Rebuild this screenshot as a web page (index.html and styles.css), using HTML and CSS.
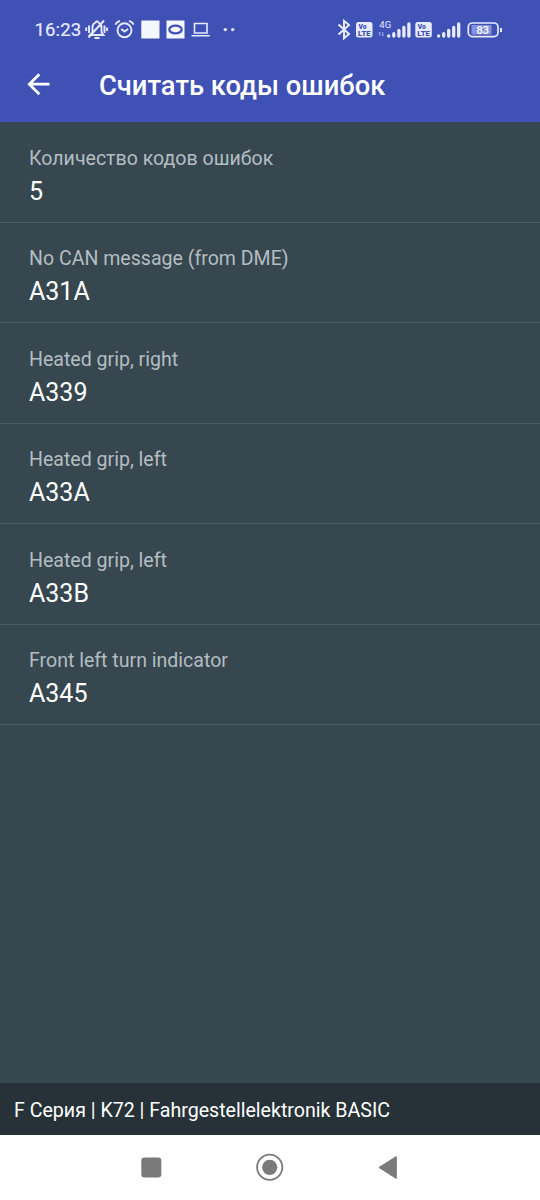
FILE: index.html
```html
<!DOCTYPE html>
<html lang="ru">
<head>
<meta charset="utf-8">
<title>Считать коды ошибок</title>
<link rel="stylesheet" href="styles.css">
</head>
<body>
<div class="screen">
  <header class="header">
    <div class="status">
      <span class="time">16:23</span>
      <svg class="status-left" width="155" height="30" viewBox="85 15 155 30" fill="none" stroke="#e6ebff" stroke-width="1.900">
        <path d="M90 35h13.500l-2-2.500v-5.500a5 5 0 0 0-3-4.500q-1.500-2.500-3 0a5 5 0 0 0-3 4.500v5.500zM94.500 38h5M88.500 37.500L104 20.500M86.200 27.500v3.500M107 27.500v3.500M89 25.500v7.500M104.500 25.500v7.500"/>
        <circle cx="124.500" cy="30.300" r="7"/>
        <path d="M121.200 29l3.300 2.600 3.500-2.600M115.300 24.700q1.500-3 4.700-3.900M133.700 24.700q-1.500-3-4.700-3.900"/>
        <path d="M141.300 20.500h18.200v18h-18.200zM166.500 20.500h18v18h-18z" fill="#f5f7ff" stroke="none"/>
        <ellipse cx="175.500" cy="29.500" rx="6.200" ry="3.800" stroke="#3f51b5" stroke-width="2.300"/>
        <path d="M194.500 23.500h12.500v9.500h-12.500zM191.500 35.700h18.300" stroke-width="1.600"/>
        <g fill="#e6ebff" stroke="none"><circle cx="225.300" cy="29.600" r="1.700"/><circle cx="232.700" cy="29.600" r="1.700"/></g>
      </svg>
      <svg class="status-right" width="170" height="30" viewBox="335 15 170 30">
        <path d="M338.500 24.500l10.500 9.500-5 4.300V20.800l5 4.200-10.500 9.500" fill="none" stroke="#e6ebff" stroke-width="2"/>
        <rect x="356" y="22" width="16.500" height="15.500" rx="2.500" fill="#e6ebff"/>
        <rect x="415.300" y="22" width="16.500" height="15.500" rx="2.500" fill="#e6ebff"/>
        <g class="volte">
          <text x="358.500" y="29" textLength="8" lengthAdjust="spacingAndGlyphs">Vo</text><text x="358" y="36" textLength="12.500" lengthAdjust="spacingAndGlyphs">LTE</text>
          <text x="417.800" y="29" textLength="8" lengthAdjust="spacingAndGlyphs">Vo</text><text x="417.300" y="36" textLength="12.500" lengthAdjust="spacingAndGlyphs">LTE</text>
        </g>
        <text class="network" x="379.300" y="28" textLength="12">4G</text>
        <path d="M379.800 36v-4l-1 1.500M382.700 32v4l1-1.500" fill="none" stroke="#aab5ee" stroke-width=".9"/>
        <g fill="none" stroke="#e6ebff" stroke-width="3.300" stroke-linecap="round">
          <path d="M388.700 36v.1M393.800 33.700v2.300M398.900 30.500v5.500M403.900 27.500v8.500M408.900 24v12"/>
          <path d="M438.600 36v.1M443.700 33.700v2.300M448.700 30.500v5.500M453.700 27.500v8.500M458.700 24v12"/>
        </g>
        <rect x="468.300" y="23" width="29.700" height="13.600" rx="4" fill="none" stroke="#e6ebff" stroke-width="1.700"/>
        <path d="M471.500 25h20v9.500h-20z" fill="#8491dc"/>
        <path d="M501 28v4" stroke="#e6ebff" stroke-width="2"/>
        <text class="battery" x="476.500" y="34" textLength="12.500">83</text>
      </svg>
    </div>
    <div class="toolbar">
      <svg class="back" width="24" height="24" viewBox="0 0 24 24" fill="none" stroke="#fff" stroke-width="2.700"><path d="M13.300 1.200L3.300 11.200l10 10M3.300 11.200h20.200"/></svg>
      <h1 class="title">Считать коды ошибок</h1>
    </div>
  </header>
  <main class="list">
    <section class="row"><div class="label">Количество кодов ошибок</div><div class="value">5</div></section>
    <section class="row"><div class="label">No CAN message (from DME)</div><div class="value">A31A</div></section>
    <section class="row"><div class="label">Heated grip, right</div><div class="value">A339</div></section>
    <section class="row"><div class="label">Heated grip, left</div><div class="value">A33A</div></section>
    <section class="row"><div class="label">Heated grip, left</div><div class="value">A33B</div></section>
    <section class="row"><div class="label">Front left turn indicator</div><div class="value">A345</div></section>
  </main>
  <footer class="context">F Серия | K72 | Fahrgestellelektronik BASIC</footer>
  <nav class="navbar">
    <svg width="540" height="65" viewBox="0 1135 540 65" fill="#7a7a7a">
      <rect x="141.300" y="1157.500" width="20" height="20" rx="3"/>
      <circle cx="269.700" cy="1167.300" r="12.600" fill="none" stroke="#7a7a7a" stroke-width="1.800"/>
      <circle cx="269.700" cy="1167.300" r="7.600"/>
      <path d="M379 1167.500l17.300-11v22z" stroke="#7a7a7a" stroke-width="1" stroke-linejoin="round"/>
    </svg>
  </nav>
</div>
</body>
</html>
```
FILE: styles.css
```css
body {
  margin: 0;
  font-family: Roboto, sans-serif;
}

.screen {
  display: flex;
  flex-direction: column;
  height: 1200px;
  background: #37474f;
}

.header {
  height: 122.400px;
  background: #3f51b5;
}

.status {
  display: flex;
  box-sizing: border-box;
  height: 50px;
  padding: 15px 35px 0 34.500px;
}

.status svg {
  flex: none;
}

.time {
  width: 50.500px;
  font-size: 18.500px;
  line-height: 30px;
  letter-spacing: .15px;
  color: #e6ebff;
  -webkit-text-stroke: .2px #e6ebff;
}

.status-right {
  margin-left: auto;
}

.volte {
  font-size: 7px;
  font-weight: 900;
  fill: #3f51b5;
}

.network {
  font-size: 9.500px;
  fill: #e6ebff;
}

.battery {
  font-size: 11px;
  font-weight: 500;
  fill: #fff;
}

.toolbar {
  display: flex;
  align-items: center;
  height: 70px;
  padding-left: 26px;
}

.back {
  margin-right: 49px;
}

.title {
  margin: 2px 0 0;
  font-size: 27.350px;
  font-weight: 500;
  line-height: 32px;
  color: #fff;
}

.list {
  flex: 1;
}

.row {
  box-sizing: border-box;
  height: 100.450px;
  padding: 24.500px 29px 0;
  border-bottom: 1px solid #4c5d65;
}

.label {
  font-size: 19.560px;
  line-height: 24px;
  color: #b4bdc2;
}

.value {
  margin-top: 5px;
  font-size: 25px;
  line-height: 32px;
  color: #fff;
}

.context {
  box-sizing: border-box;
  height: 52.500px;
  padding-left: 14px;
  background: #263238;
  font-size: 19.600px;
  line-height: 55px;
  color: #fff;
}

.navbar {
  height: 65px;
  background: #fff;
}

.navbar svg {
  display: block;
}
```
